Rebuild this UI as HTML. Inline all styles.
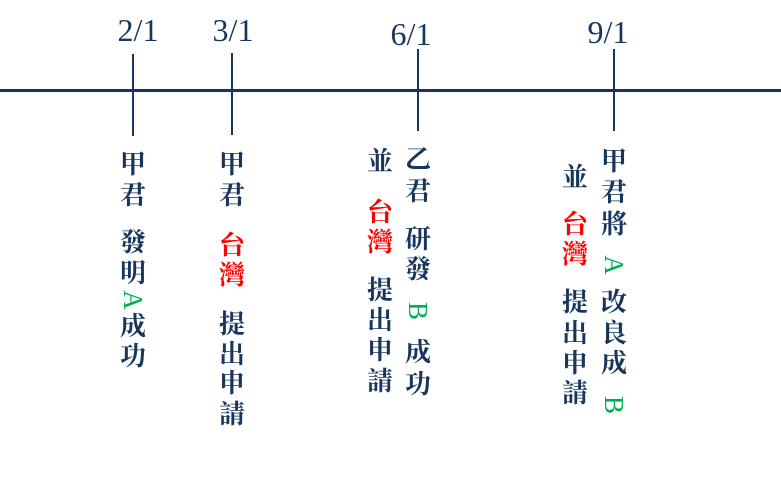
<!DOCTYPE html><html><head><meta charset="utf-8"><style>
body{margin:0;width:781px;height:485px;background:#fff;position:relative;overflow:hidden}
.c{position:absolute;width:30px;height:30px;margin:-15px 0 0 -15px;text-align:center;line-height:30px;font-size:26px;font-weight:bold;color:#17365d;font-family:"Liberation Serif","Noto Serif CJK SC",serif}
.r{color:#ff0000}.g{color:#00b050;font-weight:normal;font-size:27px;transform:rotate(90deg)}
.d{position:absolute;font-size:32px;line-height:36px;color:#17365d;font-family:"Liberation Serif",serif;transform:translateX(-50%)}
.v{position:absolute;width:2px;background:#17365d}
</style></head><body>
<div style="position:absolute;left:0;top:89px;width:781px;height:3px;background:#17365d"></div>
<div class="v" style="left:132px;top:54px;height:82px"></div>
<div class="v" style="left:231px;top:53px;height:82px"></div>
<div class="v" style="left:417px;top:49px;height:82px"></div>
<div class="v" style="left:613px;top:49px;height:82px"></div>
<div class="d" style="left:138px;top:12px">2/1</div>
<div class="d" style="left:233px;top:12px">3/1</div>
<div class="d" style="left:411px;top:16px">6/1</div>
<div class="d" style="left:608px;top:14px">9/1</div>

<div class="c" style="left:133px;top:165px">甲</div>
<div class="c" style="left:133px;top:196px">君</div>
<div class="c" style="left:133px;top:243px">發</div>
<div class="c" style="left:133px;top:274px">明</div>
<div class="c g" style="left:133px;top:300px">A</div>
<div class="c" style="left:133px;top:327px">成</div>
<div class="c" style="left:133px;top:357px">功</div>

<div class="c" style="left:232px;top:165px">甲</div>
<div class="c" style="left:232px;top:196px">君</div>
<div class="c r" style="left:232px;top:246px">台</div>
<div class="c r" style="left:232px;top:276px">灣</div>
<div class="c" style="left:232px;top:325px">提</div>
<div class="c" style="left:232px;top:355px">出</div>
<div class="c" style="left:232px;top:384px">申</div>
<div class="c" style="left:232px;top:415px">請</div>

<div class="c" style="left:380px;top:162px">並</div>
<div class="c r" style="left:380px;top:213px">台</div>
<div class="c r" style="left:380px;top:243px">灣</div>
<div class="c" style="left:380px;top:291px">提</div>
<div class="c" style="left:380px;top:321px">出</div>
<div class="c" style="left:380px;top:351px">申</div>
<div class="c" style="left:380px;top:382px">請</div>

<div class="c" style="left:418px;top:160px">乙</div>
<div class="c" style="left:418px;top:192px">君</div>
<div class="c" style="left:418px;top:240px">研</div>
<div class="c" style="left:418px;top:270px">發</div>
<div class="c g" style="left:418px;top:311px">B</div>
<div class="c" style="left:418px;top:353px">成</div>
<div class="c" style="left:418px;top:385px">功</div>

<div class="c" style="left:575px;top:178px">並</div>
<div class="c r" style="left:575px;top:225px">台</div>
<div class="c r" style="left:575px;top:255px">灣</div>
<div class="c" style="left:575px;top:303px">提</div>
<div class="c" style="left:575px;top:334px">出</div>
<div class="c" style="left:575px;top:364px">申</div>
<div class="c" style="left:575px;top:394px">請</div>

<div class="c" style="left:614px;top:162px">甲</div>
<div class="c" style="left:614px;top:193px">君</div>
<div class="c" style="left:614px;top:225px">將</div>
<div class="c g" style="left:614px;top:265px">A</div>
<div class="c" style="left:614px;top:303px">改</div>
<div class="c" style="left:614px;top:334px">良</div>
<div class="c" style="left:614px;top:364px">成</div>
<div class="c g" style="left:614px;top:405px">B</div>
</body></html>
